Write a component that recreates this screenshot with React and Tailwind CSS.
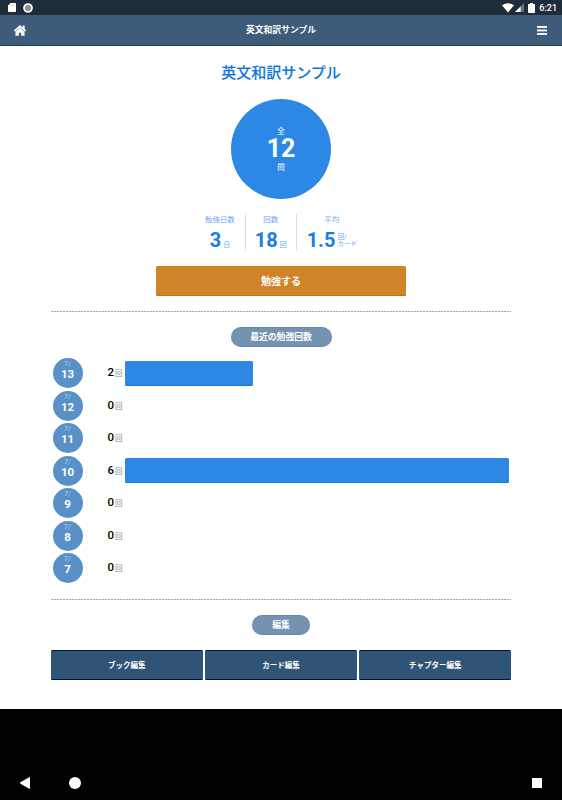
import React from 'react';

const days = [
  { day: 13, count: 2 },
  { day: 12, count: 0 },
  { day: 11, count: 0 },
  { day: 10, count: 6 },
  { day: 9, count: 0 },
  { day: 8, count: 0 },
  { day: 7, count: 0 },
];

const maxCount = 6;

function StatusBar() {
  return (
    <div className="h-[15px] bg-[#1f2c39] flex items-center justify-between pl-2 pr-[5px] text-white">
      <div className="flex items-center gap-[7px]">
        <svg width="8" height="9" viewBox="0 0 8 9">
          <path d="M2.6 0H7.2Q8 0 8 .8V8.2Q8 9 7.2 9H.8Q0 9 0 8.2V2.6Z" fill="#fff" />
          <path d="M3 1.2V2.6M4.6 1.2V2.6M6.2 1.2V2.6" stroke="#a9afb5" strokeWidth=".7" />
        </svg>
        <svg width="10" height="10" viewBox="0 0 10 10">
          <circle cx="5" cy="5" r="4" fill="#8b949c" stroke="#fff" strokeWidth="1.7" />
        </svg>
      </div>
      <div className="flex items-center">
        <svg width="12" height="10" viewBox="0 0 12 10">
          <path d="M0 2.2Q6-1.8 12 2.2L6 9.6Z" fill="#fff" />
        </svg>
        <svg className="ml-px" width="9" height="9" viewBox="0 0 9 9">
          <path d="M9 0V9H0Z" fill="#65707a" />
          <path d="M5.6 3.4V9H0Z" fill="#fff" />
        </svg>
        <svg className="ml-1" width="7" height="10" viewBox="0 0 7 10">
          <path d="M2 0H5V1H6.3Q7 1 7 1.7V9.3Q7 10 6.3 10H.7Q0 10 0 9.3V1.7Q0 1 .7 1H2Z" fill="#fff" />
        </svg>
        <span className="ml-1 pt-px text-[9px] leading-none font-medium">6:21</span>
      </div>
    </div>
  );
}

function Header() {
  return (
    <header className="h-[31px] bg-[#3e5b7a] border-b border-[#173a63] flex items-center justify-between pl-[14px] pr-[15px] text-white">
      <svg width="12" height="11" viewBox="0 0 12 11" fill="none">
        <path d="M.4 6L6 1.1L11.6 6" stroke="#fff" strokeWidth="1.7" />
        <path d="M8.8 .5H10.6V5H8.8Z" fill="#fff" />
        <path d="M6 2.8L10.5 6.7V10.8H7.1V7.8H4.9V10.8H1.5V6.7Z" fill="#fff" />
      </svg>
      <h1 className="pr-px text-[8.8px] leading-none font-bold">英文和訳サンプル</h1>
      <svg width="10" height="9" viewBox="0 0 10 9" fill="#fff">
        <rect width="10" height="1.9" />
        <rect y="3.5" width="10" height="1.9" />
        <rect y="7" width="10" height="1.9" />
      </svg>
    </header>
  );
}

function Divider({ className = '' }) {
  return (
    <div className={`h-px shrink-0 bg-[repeating-linear-gradient(90deg,#a3abb8_0_2px,#e9ecef_2px_3px)] ${className}`} />
  );
}

function Stat({ label, value, children, className = '' }) {
  return (
    <div className={`h-[37px] flex flex-col items-center text-[#6eaaf0] ${className}`}>
      <div className="mt-px text-[7.4px] leading-[9px]">{label}</div>
      <div className="mt-[5.5px] flex items-end gap-[2px]">
        <span className="text-[20px] leading-[20px] font-bold text-[#1a7de0]">{value}</span>
        {children}
      </div>
    </div>
  );
}

function Pill({ children, className = '' }) {
  return (
    <div className={`mx-auto h-5 rounded-full bg-[#7593b1] border-y border-[#5f89b0] flex items-center justify-center text-white text-[8.8px] leading-none font-bold ${className}`}>
      {children}
    </div>
  );
}

function DayRow({ day, count }) {
  return (
    <div className="h-[32.5px] flex items-center">
      <div className="ml-[1.5px] w-[30px] h-[30px] rounded-full bg-[#5890c7] flex flex-col items-center text-white">
        <span className="mt-[3px] text-[7px] leading-[7px] text-[#b9d3ec]">7/</span>
        <span className="text-[11.5px] leading-[12px] font-bold">{day}</span>
      </div>
      <div className="w-[40px] mr-[2.5px] -mt-px flex items-baseline justify-end gap-[1px]">
        <span className="text-[11.5px] leading-none font-medium text-black">{count}</span>
        <span className="text-[7.5px] leading-none text-[#888]">回</span>
      </div>
      <div className="w-[384.4px]">
        {count > 0 && (
          <div
            className="h-[25px] rounded-[1.5px] bg-[#2d88e5] border-b border-[#0f76df]"
            style={{ width: `${(count / maxCount) * 100}%` }}
          />
        )}
      </div>
    </div>
  );
}

function EditButton({ children }) {
  return (
    <button type="button" className="flex-1 h-[30px] pt-px rounded-[1.5px] bg-[#2f5475] border-y border-[#02104f] text-white text-[7.5px] leading-none font-bold">
      {children}
    </button>
  );
}

function App() {
  return (
    <div className="w-[562px] h-[800px] bg-black flex flex-col overflow-hidden font-[Roboto,'Noto_Sans_CJK_JP',sans-serif]">
      <StatusBar />
      <Header />

      <main className="h-[663px] bg-white px-[51px] flex flex-col">
        <h2 className="mt-[19px] text-center text-[15px] leading-[16px] font-medium text-[#0f78e0] [-webkit-text-stroke:0.12px_#0f78e0]">英文和訳サンプル</h2>

        <div className="mx-auto mt-[17.5px] w-[100px] h-[100px] shrink-0 rounded-full bg-[#2d88e5] flex flex-col items-center text-white">
          <span className="mt-[29px] text-[7.5px] leading-[8px]">全</span>
          <span className="mt-[0.5px] text-[25px] leading-[26px] font-bold">12</span>
          <span className="mt-[2px] text-[7.5px] leading-[8px]">問</span>
        </div>

        <div className="mt-[15.5px] flex justify-center">
          <Stat label="勉強日数" value="3" className="px-[10px]">
            <span className="text-[7px] leading-[9px]">日</span>
          </Stat>
          <Stat label="回数" value="18" className="px-[9px] border-x border-[#cfe2f9]">
            <span className="text-[7px] leading-[9px]">回</span>
          </Stat>
          <Stat label="平均" value="1.5" className="px-[10px]">
            <span className="pb-[2px] text-[6.5px] leading-[7px]">回/<br />カード</span>
          </Stat>
        </div>

        <button type="button" className="mx-auto mt-[15px] pt-[2px] w-[250px] h-[30px] shrink-0 rounded-[1.5px] bg-[#cf8428] border-b border-[#c57208] text-white text-[10px] leading-none font-bold">
          勉強する
        </button>

        <Divider className="mt-[15px]" />

        <Pill className="mt-[15px] w-[101px] shrink-0">最近の勉強回数</Pill>

        <div className="mt-[10px]">
          {days.map((d) => (
            <DayRow key={d.day} day={d.day} count={d.count} />
          ))}
        </div>

        <Divider className="mt-[14.5px]" />

        <Pill className="mt-[15px] w-[58px] shrink-0">編集</Pill>

        <div className="mt-[15px] flex gap-[2.5px]">
          <EditButton>ブック編集</EditButton>
          <EditButton>カード編集</EditButton>
          <EditButton>チャプター編集</EditButton>
        </div>
      </main>

      <nav className="mt-auto h-[35px] flex items-center pl-5 pr-5">
        <svg width="10" height="12" viewBox="0 0 10 12">
          <path d="M9.2 .2Q10-.1 10 .8V11.2Q10 12 9.2 11.7L.4 6.7Q-.2 6 .4 5.3Z" fill="#fff" />
        </svg>
        <div className="ml-[39px] w-3 h-3 rounded-full bg-white" />
        <div className="ml-auto w-[10px] h-[10px] bg-white" />
      </nav>
    </div>
  );
}

export default App;
